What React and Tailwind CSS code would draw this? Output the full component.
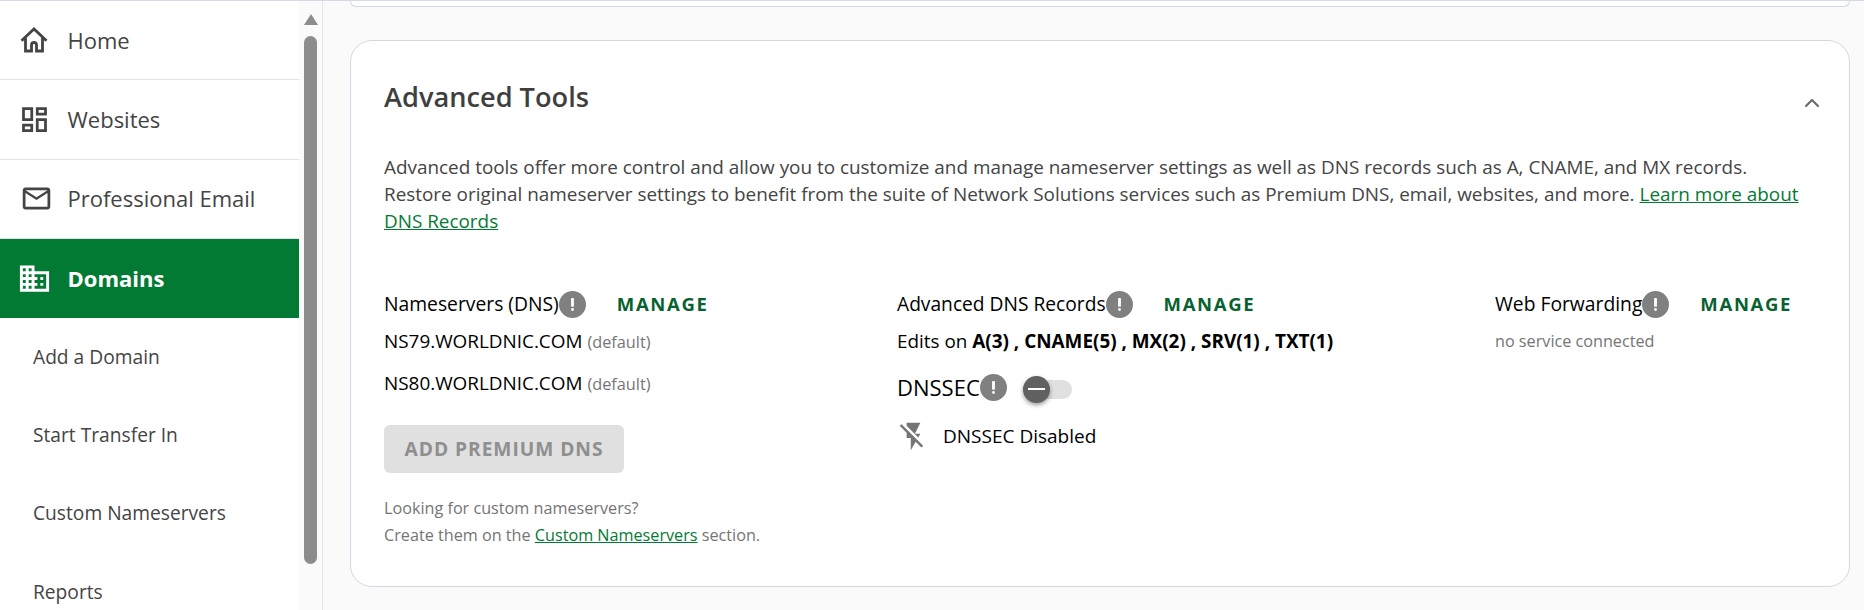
import { MdOutlineDashboard, MdMailOutline, MdDomain, MdFlashOff, MdPriorityHigh } from "react-icons/md";
import { ChevronUp } from "lucide-react";

const HomeIcon = () => (
	<svg width="28" height="28" viewBox="0 0 28 28" fill="none" stroke="currentColor" strokeWidth="2.8">
		<path d="M1.5 14.8 14 3l12.5 11.8M5.5 12v13h6v-6a2.5 2.5 0 0 1 5 0v6h6V12" />
	</svg>
);

const navItems = [
	{ label: "Home", icon: <HomeIcon /> },
	{ label: "Websites", icon: <MdOutlineDashboard size={33} className="-ml-[2px]" /> },
	{ label: "Professional Email", icon: <MdMailOutline size={33} /> },
];

const subItems = ["Add a Domain", "Start Transfer In", "Custom Nameservers", "Reports"];

const InfoDot = () => (
	<span className="flex size-[27px] shrink-0 items-center justify-center rounded-full bg-[#808080] text-white">
		<MdPriorityHigh size={17} />
	</span>
);

const Manage = () => (
	<a className="text-[18.5px] font-bold tracking-[0.09em] text-[#07622f]">MANAGE</a>
);

const Sidebar = () => (
	<aside className="flex h-full w-[323px] shrink-0 border-r border-[#e3e4e8] bg-white">
		<div className="w-[299px] shrink-0">
			{navItems.map((item) => (
				<div key={item.label} className="flex h-[79.3px] items-center border-b border-[#e2e4e8] pl-[20px] text-[#444]">
					<span className="flex w-[47.5px] shrink-0 justify-start">{item.icon}</span>
					<span className="text-[22px]">{item.label}</span>
				</div>
			))}
			<div className="flex h-[79px] items-center bg-[#037a33] pl-[20px] text-white">
				<span className="flex w-[47.5px] shrink-0"><MdDomain size={35} className="-ml-[3px]" /></span>
				<span className="text-[22px] font-bold">Domains</span>
			</div>
			{subItems.map((label) => (
				<div key={label} className="flex h-[78.3px] items-center pl-[33px] text-[19.2px] text-[#444]">
					{label}
				</div>
			))}
		</div>
		{/* Scrollbar */}
		<div className="flex flex-1 flex-col items-center bg-[#fafafa] pt-[13px]">
			<span className="h-0 w-0 border-x-[7.5px] border-b-[11px] border-x-transparent border-b-[#8c8c8c]" />
			<span className="mt-[11px] h-[528px] w-[13px] rounded-full bg-[#8c8c8c]" />
		</div>
	</aside>
);

const NameserverRow = ({ name }) => (
	<p className="text-[18.9px] text-black">
		{name} <span className="text-[16.3px] text-[#757575]">(default)</span>
	</p>
);

const App = () => (
	<div className="flex h-[610px] w-full overflow-hidden border-t border-[#d5dbe6] bg-[#fafafa] font-['Open_Sans',sans-serif]">
		<Sidebar />
		<main className="min-w-0 flex-1 pr-[14px] pl-[27px]">
			<div className="h-[6px] rounded-b-[20px] border-x border-b border-[#d5d8e2] bg-white" />
			<section className="mt-[33px] h-[547px] rounded-[22px] border border-[#d5d8e2] bg-white pt-[33px] pr-[24px] pl-[33px]">
				<div className="flex items-center justify-between">
					<h2 className="text-[27.2px] leading-[46px] font-semibold text-[#3f3f3f]">Advanced Tools</h2>
					<ChevronUp size={24} strokeWidth={2} className="mt-[12px] mr-[1px] text-[#666]" />
				</div>
				<p className="mt-[34px] text-[18.9px] leading-[27px] text-[#444]">
					Advanced tools offer more control and allow you to customize and manage nameserver settings as well as DNS records such as A, CNAME, and MX records.
					<br />
					Restore original nameserver settings to benefit from the suite of Network Solutions services such as Premium DNS, email, websites, and more.{" "}
					<a className="text-[#037a33] underline">Learn more about DNS Records</a>
				</p>
				<div className="mt-[54px] grid grid-cols-[513px_598px_1fr]">
					<div>
						<div className="flex h-[30px] items-center">
							<span className="text-[19.3px] text-black">Nameservers (DNS)</span>
							<InfoDot />
							<span className="ml-[31px]"><Manage /></span>
						</div>
						<div className="mt-[9px] flex flex-col gap-[15px] leading-[26px]">
							<NameserverRow name="NS79.WORLDNIC.COM" />
							<NameserverRow name="NS80.WORLDNIC.COM" />
						</div>
						<button className="mt-[28px] flex h-[48px] w-[240px] items-center justify-center rounded-[6px] bg-[#e0e0e0] text-[19.2px] font-bold tracking-[0.05em] text-[#8f8f8f]">
							ADD PREMIUM DNS
						</button>
						<p className="mt-[22px] text-[16.2px] leading-[27px] text-[#757575]">
							Looking for custom nameservers?
							<br />
							Create them on the <a className="text-[#037a33] underline">Custom Nameservers</a> section.
						</p>
					</div>
					<div>
						<div className="flex h-[30px] items-center">
							<span className="text-[19.2px] text-black">Advanced DNS Records</span>
							<InfoDot />
							<span className="ml-[31px]"><Manage /></span>
						</div>
						<p className="mt-[9px] text-[18.9px] leading-[26px] text-black">
							Edits on <b className="font-bold">A(3) , CNAME(5) , MX(2) , SRV(1) , TXT(1)</b>
						</p>
						<div className="mt-[18px] flex h-[30px] items-center">
							<span className="text-[22px] text-black">DNSSEC</span>
							<InfoDot />
							{/* Toggle */}
							<span className="relative mt-[4px] ml-[16px] h-[19px] w-[49px] rounded-full bg-[#e0e0e0]">
								<span className="absolute top-[-4px] left-0 flex size-[27px] items-center justify-center rounded-full bg-[#616161] shadow-[0_2px_4px_rgba(0,0,0,0.4)]">
									<span className="h-[2px] w-[17px] bg-white" />
								</span>
							</span>
						</div>
						<div className="mt-[18px] flex items-center">
							<span className="flex w-[46px] shrink-0"><MdFlashOff size={33} className="text-[#757575]" /></span>
							<span className="text-[19px] text-black">DNSSEC Disabled</span>
						</div>
					</div>
					<div>
						<div className="flex h-[30px] items-center">
							<span className="text-[19.3px] text-black">Web Forwarding</span>
							<InfoDot />
							<span className="ml-[31px]"><Manage /></span>
						</div>
						<p className="mt-[9px] text-[16.2px] leading-[26px] text-[#757575]">no service connected</p>
					</div>
				</div>
			</section>
		</main>
	</div>
);

export default App;
